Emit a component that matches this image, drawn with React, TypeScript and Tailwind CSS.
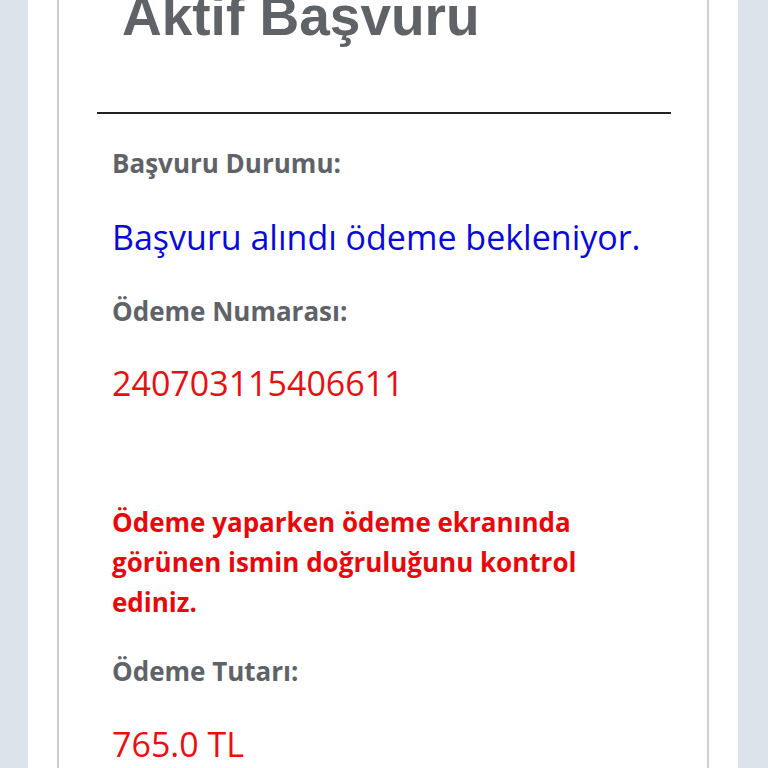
import React from "react";

const Label: React.FC<{ children: React.ReactNode; className?: string }> = ({ children, className }) => (
  <p className={"text-[26px] leading-[40px] font-bold text-[#5f6368] " + (className ?? "")}>{children}</p>
);

const App: React.FC = () => {
  return (
    <div className="h-[768px] overflow-hidden bg-[#dde3ea] pl-[28px] pr-[30px]">
      <div className="flex h-full flex-col bg-white px-[29px]">
        <div className="flex h-full flex-col border-x-2 border-[#cfcfcf] font-['Open_Sans',sans-serif]">
          <h1 className="-mt-[10px] pl-[63px] font-['Liberation_Sans',Arial,sans-serif] text-[55px] leading-[52px] font-bold text-[#5f6368]">
            Aktif Başvuru
          </h1>
          <div className="mt-[70px] ml-[38px] h-[2px] w-[574px] bg-[#222]" />

          <div className="pl-[53px]">
            <Label className="mt-[29px]">Başvuru Durumu:</Label>
            <p className="mt-[32px] text-[34px] leading-[44px] text-[#0808dc]">Başvuru alındı ödeme bekleniyor.</p>

            <Label className="mt-[32px]">Ödeme Numarası:</Label>
            <p className="mt-[30px] text-[34px] leading-[44px] text-[#e80f12]">240703115406611</p>

            <p className="mt-[97px] text-[26px] leading-[40px] font-bold text-[#e8080c]">
              Ödeme yaparken ödeme ekranında
              <br />
              görünen ismin doğruluğunu kontrol
              <br />
              ediniz.
            </p>

            <Label className="mt-[29px]">Ödeme Tutarı:</Label>
            <p className="mt-[31px] text-[34px] leading-[44px] text-[#e80f12]">765.0 TL</p>
          </div>
        </div>
      </div>
    </div>
  );
};

export default App;
